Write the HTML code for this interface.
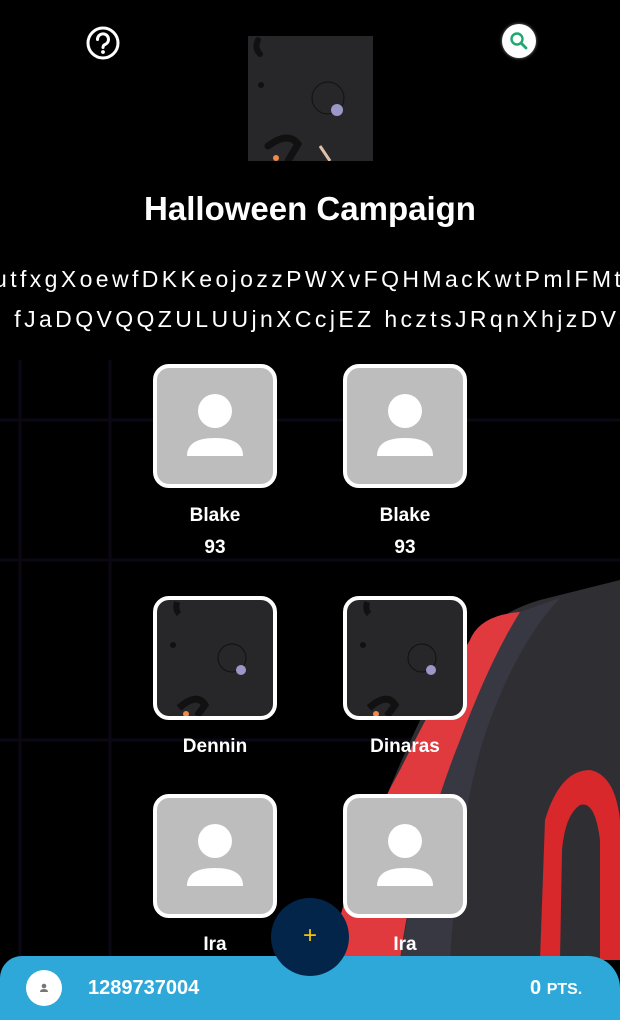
<!DOCTYPE html>
<html><head><style>
body{margin:0;width:620px;height:1020px;overflow:hidden;background:#000;font-family:"Liberation Sans",sans-serif;position:relative;color:#fff}
.abs{position:absolute}
.card{position:absolute;width:116px;height:116px;border:4px solid #fff;border-radius:16px;background:#bdbdbd;overflow:hidden}
.name{position:absolute;width:124px;text-align:center;font-weight:bold;font-size:19px}
.pat{background:#272729}
</style></head><body>
<svg class="abs" style="left:0;top:0" width="620" height="1020">
<g stroke="#0b0814" stroke-width="3" fill="none">
<line x1="0" y1="420" x2="620" y2="420"/><line x1="0" y1="560" x2="620" y2="560"/><line x1="0" y1="740" x2="620" y2="740"/>
<line x1="20" y1="360" x2="20" y2="960"/><line x1="110" y1="360" x2="110" y2="960"/>
</g>
<path d="M430 700 Q470 620 540 600 L620 580 L620 960 L330 960 Q370 820 430 700Z" fill="#2f2f33"/>
<path d="M470 640 Q480 615 520 612 L510 640 Q480 700 440 800 Q410 880 400 960 L330 960 Q350 860 400 770 Q440 690 470 640Z" fill="#e03a3e"/>
<path d="M520 612 L560 598 Q520 640 490 720 Q460 800 450 960 L400 960 Q420 840 460 740 Q490 660 520 612Z" fill="#383842"/>
<path d="M540 960 L545 820 Q560 770 590 770 Q615 775 620 820 L620 960 L600 960 L600 840 Q595 800 580 805 Q565 815 562 850 L560 960Z" fill="#d8282c"/>
</svg>
<svg class="abs" style="top:26px;left:86px" width="34" height="34" viewBox="0 0 34 34"><circle cx="17" cy="17" r="15" fill="none" stroke="#fff" stroke-width="3"/><path d="M11.5 13.5a5.5 5.5 0 1 1 7.5 5c-1.5.7-2 1.6-2 3" fill="none" stroke="#fff" stroke-width="3" stroke-linecap="round"/><circle cx="17" cy="26" r="1.9" fill="#fff"/></svg>
<div class="abs" style="left:502px;top:24px;width:34px;height:34px;border-radius:50%;background:#fff;box-shadow:0 0 3px #888"></div>
<svg class="abs" style="left:508px;top:30px" width="22" height="22" viewBox="0 0 22 22"><circle cx="9" cy="9" r="5.5" fill="none" stroke="#1fa971" stroke-width="2.4"/><line x1="13" y1="13" x2="18" y2="18" stroke="#1fa971" stroke-width="2.8" stroke-linecap="round"/></svg>
<div class="abs pat" style="left:248px;top:36px;width:125px;height:125px"><svg width="125" height="125"><path d="M10 4 Q6 12 12 18" stroke="#111" stroke-width="6" fill="none" stroke-linecap="round"/><circle cx="13" cy="49" r="3" fill="#111"/><circle cx="80" cy="62" r="16" stroke="#111" fill="none"/><circle cx="89" cy="74" r="6" fill="#9b97c9"/><path d="M20 110 Q40 95 50 108 L40 125" stroke="#111" stroke-width="7" fill="none" stroke-linecap="round"/><circle cx="28" cy="122" r="3" fill="#f08a4b"/><line x1="72" y1="110" x2="82" y2="125" stroke="#e0c0a8" stroke-width="3"/></svg></div>
<div class="abs" style="left:0;top:190px;width:620px;text-align:center;font-weight:bold;font-size:33px">Halloween Campaign</div>
<div class="abs" style="left:-6px;top:266px;white-space:nowrap;font-size:23px;letter-spacing:3.4px">utfxgXoewfDKKeojozzPWXvFQHMacKwtPmlFMt</div>
<div class="abs" style="left:-4px;top:306px;white-space:nowrap;font-size:23px;letter-spacing:3.4px">j fJaDQVQQZULUUjnXCcjEZ hcztsJRqnXhjzDVJ</div>
<svg width="0" height="0" style="position:absolute"><defs><g id="p"><circle cx="58" cy="43" r="17" fill="#fff"/><path d="M30 88 Q30 70 58 70 Q86 70 86 88Z" fill="#fff"/></g></defs></svg>
<div class="card" style="left:153px;top:364px"><svg width="116" height="116"><use href="#p"/></svg></div>
<div class="card" style="left:343px;top:364px"><svg width="116" height="116"><use href="#p"/></svg></div>
<div class="name" style="left:153px;top:505px">Blake</div><div class="name" style="left:153px;top:537px">93</div>
<div class="name" style="left:343px;top:505px">Blake</div><div class="name" style="left:343px;top:537px">93</div>
<div class="card pat" style="left:153px;top:596px"><svg width="116" height="116"><path d="M20 2 Q18 10 22 14" stroke="#111" stroke-width="6" fill="none"/><circle cx="16" cy="45" r="3" fill="#111"/><circle cx="75" cy="58" r="14" stroke="#111" fill="none"/><circle cx="84" cy="70" r="5" fill="#9b97c9"/><path d="M22 108 Q40 92 48 105 L40 116" stroke="#111" stroke-width="7" fill="none"/><circle cx="29" cy="114" r="3" fill="#f08a4b"/></svg></div>
<div class="card pat" style="left:343px;top:596px"><svg width="116" height="116"><path d="M20 2 Q18 10 22 14" stroke="#111" stroke-width="6" fill="none"/><circle cx="16" cy="45" r="3" fill="#111"/><circle cx="75" cy="58" r="14" stroke="#111" fill="none"/><circle cx="84" cy="70" r="5" fill="#9b97c9"/><path d="M22 108 Q40 92 48 105 L40 116" stroke="#111" stroke-width="7" fill="none"/><circle cx="29" cy="114" r="3" fill="#f08a4b"/></svg></div>
<div class="name" style="left:153px;top:736px">Dennin</div><div class="name" style="left:343px;top:736px">Dinaras</div>
<div class="card" style="left:153px;top:794px"><svg width="116" height="116"><use href="#p"/></svg></div>
<div class="card" style="left:343px;top:794px"><svg width="116" height="116"><use href="#p"/></svg></div>
<div class="name" style="left:153px;top:934px">Ira</div><div class="name" style="left:343px;top:934px">Ira</div>
<div class="abs" style="left:0;top:956px;width:620px;height:64px;background:#2ea8d8;border-radius:22px 32px 0 0"></div>
<div class="abs" style="left:26px;top:970px;width:36px;height:36px;border-radius:50%;background:#fff"></div>
<svg class="abs" style="left:38px;top:982px" width="12" height="12"><circle cx="6" cy="4" r="2.3" fill="#777"/><path d="M2 10 Q2 7 6 7 Q10 7 10 10Z" fill="#777"/></svg>
<div class="abs" style="left:88px;top:977px;font-weight:bold;font-size:20px">1289737004</div>
<div class="abs" style="left:530px;top:977px;font-weight:bold;font-size:20px">0 <span style="font-size:16px">PTS.</span></div>
<div class="abs" style="left:271px;top:898px;width:78px;height:78px;border-radius:50%;background:#03254a;color:#f5c400;text-align:center;line-height:76px;font-size:24px">+</div>
</body></html>
